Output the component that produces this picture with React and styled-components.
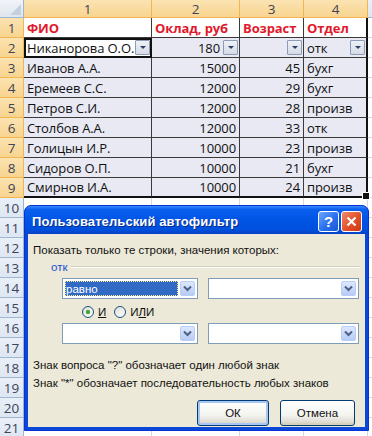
import React from 'react';
import styled, { createGlobalStyle, css } from 'styled-components';

const GlobalStyle = createGlobalStyle`
  html, body { margin: 0; padding: 0; background: #fff; }
  body { width: 372px; height: 436px; overflow: hidden; }
`;

const COLS = [128, 88, 64, 64];

const rows = [
  ['Никанорова О.О.', '180', '', 'отк'],
  ['Иванов А.А.', '15000', '45', 'бухг'],
  ['Еремеев С.С.', '12000', '29', 'бухг'],
  ['Петров С.И.', '12000', '28', 'произв'],
  ['Столбов А.А.', '12000', '33', 'отк'],
  ['Голицын И.Р.', '10000', '23', 'произв'],
  ['Сидоров О.П.', '10000', '21', 'бухг'],
  ['Смирнов И.А.', '10000', '24', 'произв'],
];

const Page = styled.div`
  position: relative;
  width: 372px;
  height: 436px;
  overflow: hidden;
  font-family: "Open Sans", "Liberation Sans", sans-serif;
`;

const Sheet = styled.div`
  display: grid;
  grid-template-columns: 24px ${COLS.map((c) => c + 'px').join(' ')} 1fr;
  grid-template-rows: 18px repeat(21, 20px);
`;

const Corner = styled.div`
  position: relative;
  background: linear-gradient(#f1f4f9, #e0e6ef);
  border-right: 1px solid #9eb6ce;
  border-bottom: 1px solid #9eb6ce;
  &::after {
    content: '';
    position: absolute;
    right: 2px;
    bottom: 2px;
    border-left: 11px solid transparent;
    border-bottom: 11px solid #c4d0de;
  }
`;

const Head = styled.div`
  display: flex;
  align-items: center;
  justify-content: center;
  font-size: 13.5px;
  color: #3b4459;
  box-sizing: border-box;
  border-right: 1px solid ${(p) => (p.$on ? '#f2b550' : '#9eb6ce')};
  border-bottom: 1px solid ${(p) => (p.$on ? '#f2b550' : '#9eb6ce')};
  background: ${(p) =>
    p.$on ? 'linear-gradient(#fbe3b2, #f8d48f)' : 'linear-gradient(#eaf0f8, #dde6f2)'};
  ${(p) =>
    p.$row &&
    css`
      padding-top: 1px;
    `}
`;

const Cell = styled.div`
  position: relative;
  display: flex;
  align-items: center;
  justify-content: ${(p) => (p.$num ? 'flex-end' : 'flex-start')};
  padding: 0 3px;
  box-sizing: border-box;
  font-size: 13px;
  letter-spacing: -0.1px;
  color: #111;
  white-space: nowrap;
  overflow: visible;
  background: ${(p) => (p.$sel ? '#e8e9f3' : '#fff')};
  border-right: 1px solid ${(p) => (p.$grid ? '#d0d7e5' : '#3a3a3a')};
  border-bottom: 1px solid ${(p) => (p.$grid ? '#d0d7e5' : '#3a3a3a')};
  ${(p) =>
    p.$title &&
    css`
      font-weight: 700;
      color: #e0192d;
    `}
  ${(p) =>
    p.$active &&
    css`
      outline: 2px solid #111;
      outline-offset: -2px;
    `}
  ${(p) =>
    p.$edge &&
    css`
      border-right: 2px solid #111;
    `}
  ${(p) =>
    p.$bottom &&
    css`
      border-bottom: 2px solid #111;
    `}
  ${(p) => p.$pad && css`padding-right: ${p.$pad}px;`}
`;

const FilterBtn = styled.span`
  position: absolute;
  right: 1px;
  top: 2px;
  width: 15px;
  height: 15px;
  box-sizing: border-box;
  border: 1px solid #8d9cb4;
  border-radius: 1px;
  background: linear-gradient(#eef1f6, #d5dbe6);
  display: flex;
  align-items: center;
  justify-content: center;
  &::after {
    content: '';
    border-left: 3px solid transparent;
    border-right: 3px solid transparent;
    border-top: 3px solid #2c3e66;
  }
`;

const FillHandle = styled.span`
  position: absolute;
  right: -4px;
  bottom: -4px;
  width: 6px;
  height: 6px;
  background: #111;
  border: 1px solid #fff;
  z-index: 2;
`;

/* ---------- dialog ---------- */

const Dialog = styled.div`
  position: absolute;
  left: 24px;
  top: 205px;
  width: 345px;
  height: 226px;
  box-sizing: border-box;
  background: #0a47d6;
  border-radius: 7px 7px 0 0;
  border: 1px solid #0831d9;
  display: flex;
  flex-direction: column;
  padding: 0 3px 3px;
  font-family: "Liberation Sans", Arial, sans-serif;
`;

const TitleBar = styled.div`
  height: 28px;
  margin: 0 -3px;
  padding: 2px 6px 0 7px;
  box-sizing: border-box;
  border-radius: 6px 6px 0 0;
  background: linear-gradient(#3a8cff 0%, #0a5fee 12%, #0055e5 50%, #0050dd 85%, #0841c4 100%);
  display: flex;
  align-items: center;
  gap: 2px;
`;

const Title = styled.div`
  flex: 1;
  color: #fff;
  font-weight: 700;
  font-size: 13px;
  text-shadow: 1px 1px 0 #0a2a8a;
  letter-spacing: 0.1px;
`;

const CapBtn = styled.div`
  width: 21px;
  height: 21px;
  box-sizing: border-box;
  border: 1px solid #fff;
  border-radius: 3px;
  display: flex;
  align-items: center;
  justify-content: center;
  color: #fff;
  font-weight: 700;
  font-size: 15px;
  background: ${(p) =>
    p.$close
      ? 'linear-gradient(135deg, #f08a6a, #e2502a 55%, #c83a15)'
      : 'linear-gradient(135deg, #6aa6ff, #2a70ee 55%, #1b57d6)'};
`;

const Body = styled.div`
  flex: 1;
  background: #ece9d8;
  padding: 10px 5px 0 5px;
  font-size: 11.5px;
  color: #111;
  display: flex;
  flex-direction: column;
`;

const Group = styled.div`
  display: flex;
  align-items: center;
  gap: 4px;
  margin: 5px 0 0 18px;
  color: #1a4fd0;
  &::after {
    content: '';
    flex: 1;
    height: 0;
    border-top: 1px solid #d0d0bf;
    border-bottom: 1px solid #fff;
  }
`;

const ComboRow = styled.div`
  display: flex;
  gap: 10px;
  margin-left: 29px;
  margin-top: ${(p) => p.$mt}px;
`;

const Combo = styled.div`
  width: ${(p) => p.$w}px;
  height: 21px;
  box-sizing: border-box;
  border: 1px solid #7f9db9;
  background: #fff;
  display: flex;
  align-items: stretch;
  padding: 2px;
  gap: 2px;
`;

const ComboText = styled.div`
  flex: 1;
  display: flex;
  align-items: center;
  padding-left: 1px;
  color: ${(p) => (p.$hl ? '#fff' : '#111')};
  background: ${(p) => (p.$hl ? '#316ac5' : 'transparent')};
  outline: ${(p) => (p.$hl ? '1px dotted #ffe98a' : 'none')};
  outline-offset: -1px;
`;

const ComboBtn = styled.div`
  width: 15px;
  box-sizing: border-box;
  border: 1px solid #b8cdf6;
  border-radius: 2px;
  background: linear-gradient(#dde8fe, #b7cbf6);
  display: flex;
  align-items: center;
  justify-content: center;
`;

const RadioRow = styled.div`
  display: flex;
  align-items: center;
  gap: 8px;
  margin: 5px 0 0 49px;
  height: 16px;
`;

const Radio = styled.label`
  display: flex;
  align-items: center;
  gap: 4px;
`;

const Dot = styled.span`
  width: 12px;
  height: 12px;
  box-sizing: border-box;
  border-radius: 50%;
  border: 1px solid #1c5180;
  background: linear-gradient(135deg, #dcdcd6, #fff);
  display: flex;
  align-items: center;
  justify-content: center;
  &::after {
    content: '';
    display: ${(p) => (p.$on ? 'block' : 'none')};
    width: 4px;
    height: 4px;
    border-radius: 50%;
    background: #3ba13a;
    box-shadow: 0 0 1px #5fcd55;
  }
`;

const Note = styled.div`
  margin-top: ${(p) => p.$mt || 0}px;
  line-height: 18px;
`;

const Buttons = styled.div`
  display: flex;
  justify-content: flex-end;
  gap: 11px;
  margin-top: 8px;
  padding-right: 5px;
`;

const XpButton = styled.div`
  width: ${(p) => p.$w}px;
  height: 26px;
  box-sizing: border-box;
  border: 1px solid #003c74;
  border-radius: 3px;
  background: linear-gradient(#ffffff, #f3f3ef 60%, #d6d0c5);
  box-shadow: inset 0 -2px 0 #d8d2bd;
  display: flex;
  align-items: center;
  justify-content: center;
  ${(p) =>
    p.$def &&
    css`
      box-shadow: inset 0 0 0 2px #a8c6f5, inset 0 -2px 0 #8aafe8;
    `}
`;

const Chevron = () => (
  <svg width="9" height="7" viewBox="0 0 9 7">
    <path d="M1 1.5 L4.5 5 L8 1.5" fill="none" stroke="#4d6185" strokeWidth="2" />
  </svg>
);

const ComboBox = ({ w, text, hl }) => (
  <Combo $w={w}>
    <ComboText $hl={hl}>{text}</ComboText>
    <ComboBtn>
      <Chevron />
    </ComboBtn>
  </Combo>
);

function App() {
  const cells = [];
  cells.push(<Corner key="c" />);
  ['1', '2', '3', '4'].forEach((h) =>
    cells.push(
      <Head key={'h' + h} $on>
        {h}
      </Head>
    )
  );
  cells.push(<Head key="h5" />);

  for (let r = 1; r <= 21; r++) {
    cells.push(
      <Head key={'r' + r} $row $on={r <= 9}>
        {r}
      </Head>
    );
    if (r === 1) {
      ['ФИО', 'Оклад, руб', 'Возраст', 'Отдел'].forEach((t, i) =>
        cells.push(
          <Cell key={'t' + i} $title $edge={i === 3}>
            {t}
          </Cell>
        )
      );
    } else if (r <= 9) {
      const d = rows[r - 2];
      d.forEach((v, i) => {
        const num = i === 1 || i === 2;
        cells.push(
          <Cell
            key={r + '-' + i}
            $num={num}
            $sel={!(r === 2 && i === 0)}
            $active={r === 2 && i === 0}
            $edge={i === 3}
            $bottom={r === 9}
            $pad={r === 2 && num ? 19 : 0}
          >
            {v}
            {r === 2 && <FilterBtn />}
            {r === 9 && i === 3 && <FillHandle />}
          </Cell>
        );
      });
    } else {
      COLS.forEach((_, i) => cells.push(<Cell key={r + '-' + i} $grid />));
    }
    cells.push(<Cell key={r + '-x'} $grid />);
  }

  return (
    <Page>
      <GlobalStyle />
      <Sheet>{cells}</Sheet>

      <Dialog>
        <TitleBar>
          <Title>Пользовательский автофильтр</Title>
          <CapBtn>?</CapBtn>
          <CapBtn $close>
            <svg width="11" height="11" viewBox="0 0 11 11">
              <path d="M1.5 1.5 L9.5 9.5 M9.5 1.5 L1.5 9.5" stroke="#fff" strokeWidth="2.2" />
            </svg>
          </CapBtn>
        </TitleBar>
        <Body>
          <div>Показать только те строки, значения которых:</div>
          <Group>отк</Group>
          <ComboRow $mt={5}>
            <ComboBox w={136} text="равно" hl />
            <ComboBox w={151} text="" />
          </ComboRow>
          <RadioRow>
            <Radio>
              <Dot $on />
              <u>И</u>
            </Radio>
            <Radio>
              <Dot />
              <span>
                И<u>Л</u>И
              </span>
            </Radio>
          </RadioRow>
          <ComboRow $mt={3}>
            <ComboBox w={136} text="" />
            <ComboBox w={151} text="" />
          </ComboRow>
          <Note $mt={12}>
            Знак вопроса "?" обозначает один любой знак
            <br />
            Знак "*" обозначает последовательность любых знаков
          </Note>
          <Buttons>
            <XpButton $w={72} $def>
              ОК
            </XpButton>
            <XpButton $w={75}>Отмена</XpButton>
          </Buttons>
        </Body>
      </Dialog>
    </Page>
  );
}

export default App;
